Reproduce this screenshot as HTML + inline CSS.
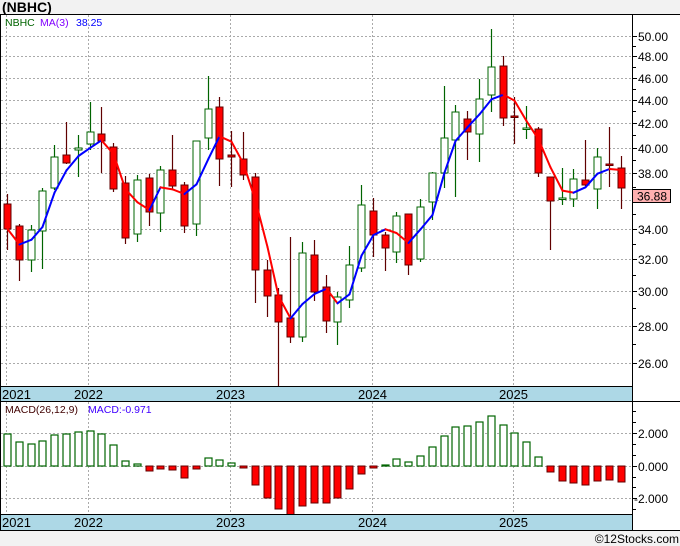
<!DOCTYPE html>
<html><head><meta charset="utf-8"><style>
body{margin:0;width:680px;height:546px;background:#f2f2f2;overflow:hidden;font-family:"Liberation Sans",sans-serif}
svg{display:block}
</style></head><body>
<svg id="s" width="680" height="546" xmlns="http://www.w3.org/2000/svg" font-family="Liberation Sans, sans-serif">
<rect x="0" y="0" width="680" height="546" fill="#f2f2f2"/>
<text x="2" y="12" font-size="14" font-weight="bold" fill="#000">(NBHC)</text>
<rect x="0" y="14" width="680" height="516" fill="#fff"/>
<g id="g"></g>
<rect x="0" y="387" width="632" height="14" fill="#add8e6"/>
<rect x="0" y="515" width="632" height="15" fill="#add8e6"/>
<line x1="0" y1="14.5" x2="680" y2="14.5" stroke="#000"/>
<line x1="0" y1="386.5" x2="632" y2="386.5" stroke="#000"/>
<line x1="0" y1="401.5" x2="680" y2="401.5" stroke="#000"/>
<line x1="0" y1="514.5" x2="632" y2="514.5" stroke="#000"/>
<line x1="0" y1="530.5" x2="680" y2="530.5" stroke="#000"/>
<line x1="0.5" y1="14" x2="0.5" y2="530" stroke="#000"/>
<line x1="632.5" y1="14" x2="632.5" y2="530" stroke="#000"/>
<rect x="0" y="531" width="680" height="15" fill="#f2f2f2"/>
<g font-size="13" fill="#000">
<text x="2" y="399">2021</text><text x="74" y="399">2022</text><text x="216" y="399">2023</text><text x="358" y="399">2024</text><text x="499" y="399">2025</text>
<text x="2" y="527">2021</text><text x="74" y="527">2022</text><text x="216" y="527">2023</text><text x="358" y="527">2024</text><text x="499" y="527">2025</text>
</g>
<text x="5" y="26" font-size="10.5" fill="#006400">NBHC</text>
<text x="40" y="26" font-size="10.5" fill="#8000ff">MA(3)</text>
<text x="76" y="26" font-size="10.5" fill="#0000ff">38.25</text>
<text x="5" y="413" font-size="10.5" fill="#400000">MACD(26,12,9)</text>
<text x="88" y="413" font-size="10.5" fill="#4000ff">MACD:-0.971</text>
<text x="679" y="543" font-size="12" fill="#000" text-anchor="end">©12Stocks.com</text>
</svg>
<script>
var NS="http://www.w3.org/2000/svg",g=document.getElementById('g');
function el(t,a){var e=document.createElementNS(NS,t);for(var k in a)e.setAttribute(k,a[k]);g.appendChild(e);return e;}
function py(p){return 36+500*(Math.log(50)-Math.log(p));}
[50,48,46,44,42,40,38,36,34,32,30,28,26].forEach(function(p){var y=Math.round(py(p))+.5;
 el('line',{x1:1,y1:y,x2:632,y2:y,stroke:'#aaa','stroke-dasharray':'2,2'});
 el('line',{x1:632,y1:y,x2:637,y2:y,stroke:'#000'});
 if(p!=36){var t=el('text',{x:638,y:y+4.5,'font-size':12,fill:'#000'});t.textContent=p.toFixed(2);}
 var y2=Math.round(py(p-1))+.5;if(p>26){el('line',{x1:632,y1:y2,x2:636,y2:y2,stroke:'#000'});}
});
[433,466,498].forEach(function(y,i){el('line',{x1:1,y1:y+.5,x2:632,y2:y+.5,stroke:'#aaa','stroke-dasharray':'2,2'});
 el('line',{x1:632,y1:y+.5,x2:637,y2:y+.5,stroke:'#000'});
 var t=el('text',{x:i==2?634:638,y:y+5,'font-size':12,fill:'#000'});t.textContent=['2.000','0.000','-2.000'][i];});
[411,422,444,455,477,487,509].forEach(function(y){el('line',{x1:632,y1:y+.5,x2:636,y2:y+.5,stroke:'#000'});});
[6,88,230,372,513].forEach(function(x){el('line',{x1:x+.5,y1:15,x2:x+.5,y2:386,stroke:'#aaa','stroke-dasharray':'2,2'});
 el('line',{x1:x+.5,y1:402,x2:x+.5,y2:514,stroke:'#aaa','stroke-dasharray':'2,2'});});
var C=[[0,204,229,194,250],[0,226,260,224,281],[1,230,260,225,272],[1,191,231,188,269],[1,157,188,145,190],
[0,155,163,122,164],[1,148,150,135,177],[1,132,144,102,150],[0,134,141,107,173],[0,147,189,143,192],
[0,183,238,176,244],[1,180,234,175,242],[0,178,212,174,226],[1,170,213,166,232],[0,170,186,135,189],
[0,185,226,182,233],[1,141,224,141,236],[1,109,138,76,150],[0,107,159,97,186],[0,155,157,131,187],
[0,159,175,132,180],[0,177,270,173,303],[0,270,296,260,317],[0,295,322,288,390],[0,318,337,237,343],
[1,253,337,242,342],[0,255,292,240,301],[0,287,321,275,333],[1,297,322,292,345],[1,265,300,246,308],
[1,205,268,185,272],[0,211,235,198,257],[0,235,248,232,271],[1,216,252,212,263],[0,214,265,214,275],
[1,207,259,199,262],[1,173,202,172,220],[1,138,173,86,188],[1,112,140,105,197],[0,119,132,111,160],
[1,99,134,79,162],[1,67,95,29,112],[0,66,118,56,126],[0,116,117,97,144],[1,128,129,106,139],
[0,129,173,127,177],[0,177,201,177,250],[1,198,199,168,205],[1,179,199,169,207],[0,180,185,140,186],
[1,157,189,148,209],[0,164,165,127,187],[0,168,188,156,209]];
var M=[434,442,444,441,435,434,432,431,434,445,461,464,471,469,470,478,469,458,460,463,468,485,498,509,515,506,503,503,498,489,474,468,465,459,462,456,447,436,427,426,422,416,425,433,442,457,472,481,483,485,481,480,482];
var X=function(i){return Math.round(7+11.8*i);};
var cl=C.map(function(c){return c[0]?c[1]:c[2];});
C.forEach(function(c,i){var x=X(i),col=c[0]?'#006400':'#600000';
 el('line',{x1:x+.5,y1:c[3],x2:x+.5,y2:c[4],stroke:col,'stroke-width':1.2});
 var h=Math.max(c[2]-c[1],1.5);
 el('rect',{x:x-3,y:c[1],width:7,height:h,fill:c[0]?'#fff':'#ff0000',stroke:col,'stroke-width':1});
 var z=466,t=M[i];
 if(t<z)el('rect',{x:x-3,y:t,width:7,height:z-t,fill:'#fff',stroke:'#006400','stroke-width':1.2});
 else el('rect',{x:x-3,y:z,width:7,height:Math.max(t-z,1.5),fill:'#ff0000',stroke:'#600000','stroke-width':1});
});
var ma=[];for(var i=0;i<C.length;i++){var s=0,n=0;for(var j=Math.max(0,i-2);j<=i;j++){s+=cl[j];n++;}ma.push(s/n);}
for(var i=1;i<ma.length;i++){el('line',{x1:X(i-1)+.5,y1:ma[i-1],x2:X(i)+.5,y2:ma[i],stroke:ma[i]<=ma[i-1]?'#0000ff':'#ff0000','stroke-width':2,'stroke-linecap':'round'});}
el('rect',{x:632.5,y:189.5,width:38,height:13,fill:'#ffb0b0',stroke:'#000'});
var t=el('text',{x:637,y:200.5,'font-size':12,fill:'#000'});t.textContent='36.88';
</script>
</body></html>
